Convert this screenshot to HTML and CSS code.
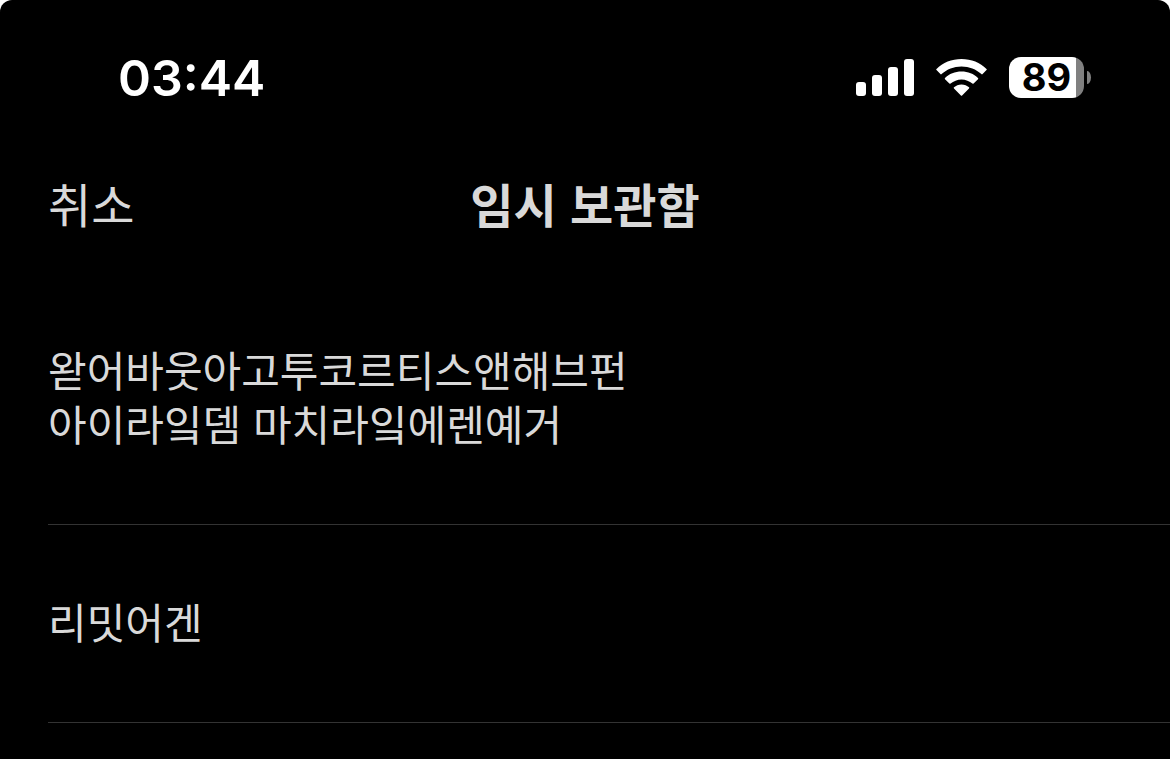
FILE: index.html
```html
<!DOCTYPE html>
<html lang="ko">
<head>
    <meta charset="UTF-8">
    <meta name="viewport" content="width=device-width, initial-scale=1.0">
    <title>임시 보관함</title>
    <link rel="stylesheet" href="styles.css">
</head>
<body>
    <div class="screen">
        <div class="status-bar">
            <time class="clock">03:44</time>
            <div class="status-icons">
                <svg class="signal" width="58" height="37" viewBox="0 0 58 37" fill="#fff">
                    <rect x="0" y="23" width="10" height="14" rx="3"/>
                    <rect x="16" y="16" width="10" height="21" rx="3"/>
                    <rect x="32" y="8" width="10" height="29" rx="3"/>
                    <rect x="48" y="0" width="10" height="37" rx="3"/>
                </svg>
                <svg class="wifi" width="51" height="37" viewBox="0 0 51 37" fill="#fff">
                    <path d="M25.5 0C35.300 0 44.200 3.700 50.500 9.900Q51.100 10.500 50.500 11.100L46.600 15.100Q46 15.700 45.400 15.100C40.200 10.300 33.200 7.500 25.500 7.500S10.800 10.300 5.600 15.100Q5 15.700 4.400 15.100L.5 11.100Q-.1 10.500 .5 9.900C6.800 3.700 15.700 0 25.500 0Z"/>
                    <path d="M25.500 12.600C32 12.600 37.800 15 42 19Q42.500 19.600 42 20.200L37.600 24.600Q37 25.100 36.400 24.600C33.500 22 29.700 20.400 25.500 20.400S17.500 22 14.600 24.600Q14 25.100 13.400 24.600L9 20.200Q8.500 19.600 9 19C13.200 15 19 12.600 25.500 12.600Z"/>
                    <path d="M25.500 25.400C28.500 25.400 31 26.500 33 28.300Q33.600 28.900 33 29.500L26.100 36.400Q25.500 37 24.900 36.400L18 29.500Q17.400 28.900 18 28.300C20 26.500 22.500 25.400 25.500 25.400Z"/>
                </svg>
                <div class="battery"><span class="battery-level">89</span></div>
            </div>
        </div>
        <header class="nav">
            <button type="button" class="cancel">취소</button>
            <h1>임시 보관함</h1>
        </header>
        <ul class="drafts">
            <li>왇어바웃아고투코르티스앤해브펀<br>아이라잌뎀 마치라잌에렌예거</li>
            <li>리밋어겐</li>
        </ul>
    </div>
</body>
</html>
```
FILE: styles.css
```css
* {
    margin: 0;
    padding: 0;
    box-sizing: border-box;
}
body {
    background: #fff;
    font-family: "Noto Sans CJK KR", sans-serif;
    color: #d9d9d9;
}
.screen {
    min-height: 100vh;
    background: #000;
    border-radius: 12px 12px 0 0;
    overflow: hidden;
}
.status-bar {
    display: flex;
    justify-content: space-between;
    align-items: center;
    padding: 48px 79px 0 118px;
    height: 107px;
    color: #fff;
    font-family: Inter, sans-serif;
}
.clock {
    font-size: 50px;
    font-weight: 600;
    line-height: 60px;
}
.status-icons {
    display: flex;
    align-items: center;
}
.wifi {
    margin: 0 22px;
}
.battery {
    position: relative;
    width: 75px;
    height: 41px;
    margin-right: 7px;
    border-radius: 12px;
    background: linear-gradient(to right, #fff 67px, #808080 67px);
}
.battery::after {
    content: "";
    position: absolute;
    top: 14px;
    right: -7px;
    width: 4px;
    height: 13px;
    border-radius: 0 4px 4px 0 / 0 7px 7px 0;
    background: #808080;
}
.battery-level {
    display: block;
    color: #000;
    font-size: 38px;
    font-weight: 700;
    line-height: 41px;
    text-align: center;
}
.nav {
    display: grid;
    grid-template-columns: 1fr auto 1fr;
    align-items: center;
    height: 192px;
    padding: 0 48px;
}
.cancel {
    justify-self: start;
    border: 0;
    background: none;
    color: inherit;
    font-family: inherit;
    font-size: 47px;
    line-height: 60px;
    cursor: pointer;
}
.nav h1 {
    font-size: 47px;
    font-weight: 700;
    line-height: 60px;
}
.drafts {
    margin-left: 48px;
    list-style: none;
}
.drafts li {
    padding: 43px 48px 74px 0;
    border-bottom: 1px solid #333;
    font-size: 42px;
    line-height: 54px;
}
.drafts li + li {
    padding-top: 69px;
}
```
